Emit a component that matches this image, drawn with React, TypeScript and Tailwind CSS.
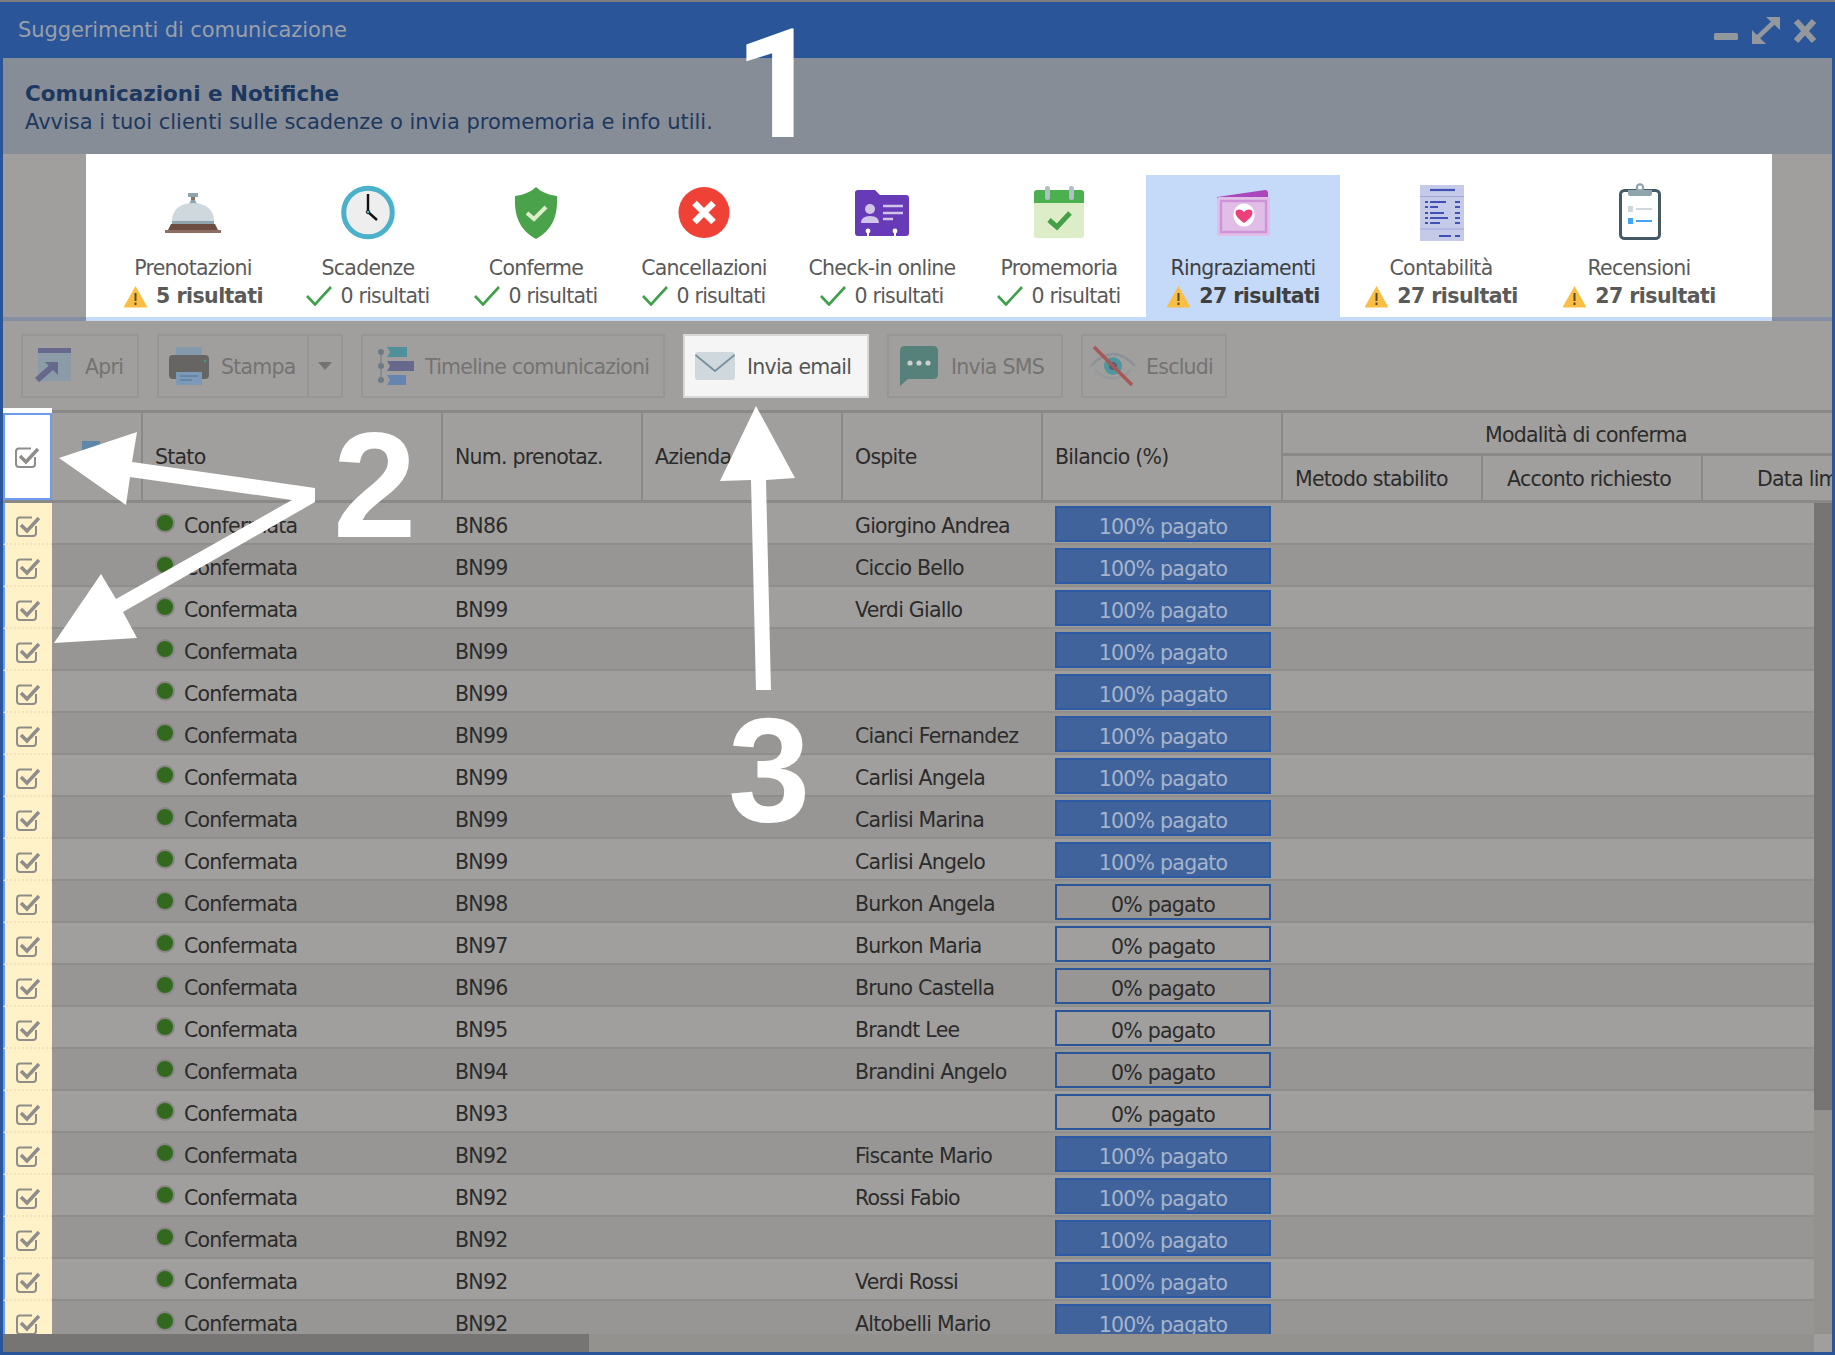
import React from "react";

const Warn = () => (
  <svg width="25" height="23" viewBox="0 0 25 23" className="shrink-0">
    <path d="M12.5 1 L24 21.5 Q24.5 22.5 23 22.5 L2 22.5 Q0.5 22.5 1 21.5 Z" fill="#f9bf45" />
    <rect x="11.5" y="8" width="2" height="8" fill="#5b4a20" />
    <rect x="11.5" y="17.5" width="2" height="2.5" fill="#5b4a20" />
  </svg>
);
const Ok = () => (
  <svg width="26" height="20" viewBox="0 0 26 20" className="shrink-0">
    <path d="M1 10 L9 18.5 L25 1" fill="none" stroke="#3f9f4a" strokeWidth="2.6" />
  </svg>
);

const IconBell = () => (
  <svg width="60" height="60" viewBox="0 0 60 60">
    <rect x="25" y="10" width="10" height="4" fill="#90a4ae" />
    <rect x="28" y="14" width="4" height="3" fill="#8d6e63" />
    <path d="M26 21 L28 17 L32 17 L34 21 Z" fill="#90a4ae" />
    <path d="M9 38 C9 26 18 20 30 20 C42 20 51 26 51 38 Z" fill="#cfd8dc" />
    <rect x="9" y="38" width="42" height="3" fill="#90a4ae" />
    <path d="M8 41 L52 41 L55 47 L5 47 Z" fill="#6d4c41" />
    <rect x="2" y="47" width="56" height="3" fill="#8d6e63" />
  </svg>
);
const IconClock = () => (
  <svg width="60" height="60" viewBox="0 0 60 60">
    <circle cx="30" cy="29.5" r="24.3" fill="#eeeeee" stroke="#4bb0c9" strokeWidth="5" />
    <path d="M30 11 L30 29 L39 37" fill="none" stroke="#111" strokeWidth="2.4" />
    <circle cx="30" cy="29" r="1.8" fill="#4bb0c9" stroke="#111" strokeWidth="0.8" />
  </svg>
);
const IconShield = () => (
  <svg width="60" height="60" viewBox="0 0 60 60">
    <path d="M30 4 C35 9 43 12 51 13 C52 34 46 47 30 56 C14 47 8 34 9 13 C17 12 25 9 30 4 Z" fill="#4aa34a" />
    <path d="M21 30 L28 36 L40 24" fill="none" stroke="#dcedc8" strokeWidth="4" />
  </svg>
);
const IconX = () => (
  <svg width="60" height="60" viewBox="0 0 60 60">
    <circle cx="30" cy="29.5" r="25.5" fill="#ef4136" />
    <path d="M20.5 20 L39.5 39 M39.5 20 L20.5 39" stroke="#fff" strokeWidth="6.5" />
  </svg>
);
const IconCheckin = () => (
  <svg width="60" height="60" viewBox="0 0 60 60">
    <path d="M6 7 L23 7 L28 12 L54 12 Q57 12 57 15 L57 50 Q57 53 54 53 L6 53 Q3 53 3 50 L3 10 Q3 7 6 7 Z" fill="#673ab7" />
    <circle cx="18" cy="26" r="5" fill="#d1c4e9" />
    <path d="M9 40 Q9 33 18 33 Q27 33 27 40 Z" fill="#d1c4e9" />
    <path d="M31 23 H51 M31 30 H51 M31 36 H41" stroke="#d1c4e9" strokeWidth="2.4" />
    <circle cx="16" cy="48" r="2.4" fill="#fff" />
    <rect x="15" y="48" width="2" height="5" fill="#fff" />
    <circle cx="43" cy="48" r="2.4" fill="#fff" />
    <rect x="42" y="48" width="2" height="5" fill="#fff" />
  </svg>
);
const IconCalendar = () => (
  <svg width="60" height="60" viewBox="0 0 60 60">
    <path d="M5 20 H55 V52 Q55 55 52 55 H8 Q5 55 5 52 Z" fill="#dcedc8" />
    <path d="M8 7 H52 Q55 7 55 10 V20 H5 V10 Q5 7 8 7 Z" fill="#4caf50" />
    <rect x="16" y="3" width="5" height="14" rx="2.5" fill="#b0bec5" />
    <rect x="40" y="3" width="5" height="14" rx="2.5" fill="#b0bec5" />
    <path d="M20 37 L28 44 L41 30" fill="none" stroke="#43a047" strokeWidth="5" />
  </svg>
);
const IconCard = () => (
  <svg width="60" height="60" viewBox="0 0 60 60">
    <path d="M4 14 L52 7 Q55 7 55 10 L55 16 L4 16 Z" fill="#ab47bc" />
    <rect x="4" y="14" width="53" height="39" rx="2" fill="#e1bee7" />
    <rect x="8" y="18" width="45" height="31" fill="#e1bee7" stroke="#ce93d8" strokeWidth="2.4" />
    <ellipse cx="31" cy="32" rx="10.5" ry="11.5" fill="#fff" />
    <path d="M31 40 C24 35 22.5 32 22.5 29.5 C22.5 26 28 25 31 29 C34 25 39.5 26 39.5 29.5 C39.5 32 38 35 31 40 Z" fill="#ec407a" />
  </svg>
);
const IconReceipt = () => (
  <svg width="60" height="60" viewBox="0 0 60 60">
    <rect x="9" y="2" width="44" height="56" fill="#c5cae9" />
    <path d="M9 13.5 H53 M9 46 H53" stroke="#9fa8da" strokeWidth="1.2" />
    <path d="M19 7 H44" stroke="#3f51b5" strokeWidth="2.2" />
    <path d="M14 19 H17 M19 19 H35 M44 19 H49 M14 24 H17 M19 24 H27 M44 24 H49 M14 30 H17 M19 30 H33 M44 30 H49 M14 35 H17 M19 35 H37 M44 35 H49 M14 40 H17 M19 40 H29 M44 40 H49 M28 53 H40 M44 53 H49" stroke="#3f51b5" strokeWidth="2.2" />
  </svg>
);
const IconClipboard = () => (
  <svg width="60" height="60" viewBox="0 0 60 60">
    <rect x="11.5" y="7.5" width="39" height="48" rx="4" fill="#fff" stroke="#455a64" strokeWidth="3" />
    <circle cx="31" cy="4.5" r="3.2" fill="#fff" stroke="#90a4ae" strokeWidth="2.2" />
    <path d="M19 7 H43 V11 Q43 13 41 13 H21 Q19 13 19 11 Z" fill="#90a4ae" />
    <rect x="19" y="23" width="5" height="6" fill="#cfd8dc" />
    <rect x="27" y="25" width="16" height="2" fill="#cfd8dc" />
    <rect x="19" y="35" width="5" height="6" fill="#42a5f5" />
    <rect x="27" y="37" width="16" height="2" fill="#42a5f5" />
  </svg>
);

const tabs = [
  { w: "w-[174px]", icon: <IconBell />, label: "Prenotazioni", res: "5 risultati", warn: true },
  { w: "w-[176px]", icon: <IconClock />, label: "Scadenze", res: "0 risultati" },
  { w: "w-[160px]", icon: <IconShield />, label: "Conferme", res: "0 risultati" },
  { w: "w-[176px]", icon: <IconX />, label: "Cancellazioni", res: "0 risultati" },
  { w: "w-[180px]", icon: <IconCheckin />, label: "Check-in online", res: "0 risultati" },
  { w: "w-[174px]", icon: <IconCalendar />, label: "Promemoria", res: "0 risultati" },
  { w: "w-[194px]", icon: <IconCard />, label: "Ringraziamenti", res: "27 risultati", warn: true, active: true },
  { w: "w-[202px]", icon: <IconReceipt />, label: "Contabilità", res: "27 risultati", warn: true },
  { w: "w-[194px]", icon: <IconClipboard />, label: "Recensioni", res: "27 risultati", warn: true },
];

type Row = [string, string, number];
const rows: Row[] = [
  ["BN86", "Giorgino Andrea", 100],
  ["BN99", "Ciccio Bello", 100],
  ["BN99", "Verdi Giallo", 100],
  ["BN99", "", 100],
  ["BN99", "", 100],
  ["BN99", "Cianci Fernandez", 100],
  ["BN99", "Carlisi Angela", 100],
  ["BN99", "Carlisi Marina", 100],
  ["BN99", "Carlisi Angelo", 100],
  ["BN98", "Burkon Angela", 0],
  ["BN97", "Burkon Maria", 0],
  ["BN96", "Bruno Castella", 0],
  ["BN95", "Brandt Lee", 0],
  ["BN94", "Brandini Angelo", 0],
  ["BN93", "", 0],
  ["BN92", "Fiscante Mario", 100],
  ["BN92", "Rossi Fabio", 100],
  ["BN92", "", 100],
  ["BN92", "Verdi Rossi", 100],
  ["BN92", "Altobelli Mario", 100],
];

const Check = () => (
  <svg width="24" height="24" viewBox="0 0 24 24" className="shrink-0">
    <path d="M16 3.5 H4 Q1 3.5 1 6.5 V19 Q1 22 4 22 H17 Q20 22 20 19 V12" fill="none" stroke="#8e8d8b" strokeWidth="2" />
    <path d="M5 11 L11 17 L23 4" fill="none" stroke="#8e8d8b" strokeWidth="3.6" />
  </svg>
);

const btn = "h-[64px] border-2 flex items-center shrink-0";
const btnOff = "border-[#979694] text-[#747372]";

export default function App() {
  return (
    <div className="relative h-[1355px] w-[1835px] overflow-hidden bg-[#7d7c7a] pt-[2px] font-['DejaVu_Sans','Liberation_Sans',sans-serif] text-[20.5px] tracking-[-0.75px] text-[#2b2b2b]">
      <div className="flex h-[1353px] flex-col border-x-[3px] border-b-[3px] border-[#2a5599] bg-[#a19f9d]">
        {/* title bar */}
        <div className="flex h-[56px] shrink-0 items-center justify-between bg-[#2a5599] pl-[15px] pr-[14px] text-[#9a9fa8]">
          <span className="pt-[2px] text-[21px] tracking-[-0.1px]">Suggerimenti di comunicazione</span>
          <svg width="104" height="30" viewBox="0 0 104 30">
            <rect x="0" y="18" width="24" height="7" rx="1.5" fill="#93989f" />
            <path d="M40 26 L62 5" fill="none" stroke="#93989f" strokeWidth="4.5" />
            <path d="M52 2 H66 V15 Z M38 15 V29 H52 Z" fill="#93989f" />
            <path d="M82 6 L100 26 M100 6 L82 26" stroke="#93989f" strokeWidth="6" />
          </svg>
        </div>
        {/* info band */}
        <div className="flex h-[96px] shrink-0 flex-col justify-center bg-[#868d96] pl-[22px] pt-[4px] text-[21px] tracking-normal text-[#1d3860]">
          <div className="text-[21.5px] font-bold leading-[28px]">Comunicazioni e Notifiche</div>
          <div className="leading-[28px]">Avvisa i tuoi clienti sulle scadenze o invia promemoria e info utili.</div>
        </div>
        {/* tabs */}
        <div className="shrink-0 border-b-[4px] border-[#858fa3]">
          <div className="ml-[83px] flex h-[163px] w-[1686px] bg-white pl-[20px] pt-[21px]">
            {tabs.map((t) => (
              <div key={t.label} className={`flex h-[142px] shrink-0 flex-col items-center pt-[8px] ${t.w} ${t.active ? "bg-[#c5d9f9] text-[#3f3f3f]" : "text-[#5a5a5a]"}`}>
                {t.icon}
                <div className="mt-[11px] leading-[28px]">{t.label}</div>
                <div className="flex h-[28px] items-center gap-[8px] leading-[28px]">
                  {t.warn ? <Warn /> : <Ok />}
                  <span className={t.warn ? "font-bold tracking-[-0.55px]" : ""}>{t.res}</span>
                </div>
              </div>
            ))}
          </div>
        </div>
        <div className="ml-[83px] -mt-[4px] h-[4px] w-[1686px] shrink-0 bg-[#c5d9f9]" />
        {/* toolbar */}
        <div className="flex h-[89px] shrink-0 items-start gap-[18px] pl-[18px] pt-[13px]">
          <div className={`${btn} ${btnOff} w-[118px] pl-[10px] gap-[6px]`}>
            <svg width="46" height="46" viewBox="0 0 46 46">
              <rect x="5" y="5" width="33" height="33" fill="#8b9ba8" />
              <rect x="5" y="5" width="33" height="5" fill="#66698c" />
              <path d="M4 37 L20 23" stroke="#66698c" strokeWidth="6" />
              <path d="M12 19 H25 V32 Z" fill="#66698c" />
            </svg>
            <span className="pt-[2px]">Apri</span>
          </div>
          <div className={`${btn} ${btnOff} w-[186px] pl-[8px]`}>
            <svg width="44" height="46" viewBox="0 0 44 46">
              <rect x="9" y="4" width="26" height="12" fill="#849aab" />
              <rect x="2" y="12" width="40" height="24" rx="4" fill="#666564" />
              <rect x="9" y="29" width="26" height="13" fill="#7c9ab8" />
              <path d="M13 33 H31 M13 37 H25" stroke="#5e7ea3" strokeWidth="1.6" />
              <rect x="37" y="17" width="2" height="2" fill="#43a070" />
            </svg>
            <span className="ml-[10px] w-[86px] pt-[2px]">Stampa</span>
            <span className="flex h-full flex-1 items-center justify-center border-l-2 border-[#979694]">
              <svg width="14" height="8" viewBox="0 0 14 8"><path d="M0 0 H14 L7 8 Z" fill="#747372" /></svg>
            </span>
          </div>
          <div className={`${btn} ${btnOff} w-[304px] pl-[13px] gap-[11px]`}>
            <svg width="38" height="46" viewBox="0 0 38 46">
              <path d="M5 9 V37" stroke="#6e7a85" strokeWidth="1" />
              <circle cx="5" cy="9" r="3" fill="#6e7a85" />
              <circle cx="5" cy="23" r="3" fill="#6e7a85" />
              <circle cx="5" cy="37" r="3" fill="#6e7a85" />
              <path d="M14 9 L11 4 H31 V14 H11 Z" fill="#50909a" />
              <path d="M14 23 L11 18 H38 V28 H11 Z" fill="#66698c" />
              <path d="M14 37 L11 32 H30 V42 H11 Z" fill="#6684b0" />
            </svg>
            <span className="pt-[2px]">Timeline comunicazioni</span>
          </div>
          <div className={`${btn} w-[186px] border-[#d8d8d8] bg-[#f5f5f5] pl-[10px] gap-[12px] text-[#555]`}>
            <svg width="40" height="28" viewBox="0 0 40 28">
              <rect width="40" height="28" rx="3" fill="#cfd8dc" />
              <path d="M0.5 3 L20 19 L39.5 3" fill="none" stroke="#78909c" strokeWidth="1.8" />
            </svg>
            <span className="pt-[2px]">Invia email</span>
          </div>
          <div className={`${btn} ${btnOff} w-[176px] pl-[11px] gap-[13px]`}>
            <svg width="38" height="40" viewBox="0 0 38 40">
              <path d="M5 0 H33 Q38 0 38 5 V28 Q38 33 33 33 H8 L0 40 V5 Q0 0 5 0 Z" fill="#56807a" />
              <circle cx="10" cy="17" r="2.6" fill="#c9d0ce" />
              <circle cx="19" cy="17" r="2.6" fill="#c9d0ce" />
              <circle cx="28" cy="17" r="2.6" fill="#c9d0ce" />
            </svg>
            <span className="pt-[2px]">Invia SMS</span>
          </div>
          <div className={`${btn} ${btnOff} w-[146px] pl-[7px] gap-[10px]`}>
            <svg width="46" height="42" viewBox="0 0 46 42">
              <path d="M1 21 Q23 -3 45 21" fill="none" stroke="#8a9298" strokeWidth="2.4" />
              <path d="M5 25 Q23 42 41 25" fill="none" stroke="#93999d" strokeWidth="2.4" />
              <circle cx="23" cy="21" r="9" fill="#4f969e" />
              <circle cx="23" cy="21" r="4" fill="#56627a" />
              <path d="M4 2 L42 40" stroke="#a85858" strokeWidth="3.6" />
            </svg>
            <span className="pt-[2px]">Escludi</span>
          </div>
        </div>
        {/* table header */}
        <div className="flex h-[93px] shrink-0 border-y-[3px] border-[#8a8987]">
          <div className="relative flex w-[49px] shrink-0 items-center justify-center border-2 border-[#6b9cf0] bg-white pr-[2px]">
            <Check />
            <div className="absolute -left-[2px] -right-[2px] -top-[7px] h-[5px] bg-white" />
          </div>
          <div className="relative w-[91px] shrink-0 border-r-2 border-[#8a8987]">
            <div className="absolute left-[30px] top-[28px] h-[14px] w-[18px] bg-[#5f87a8]" />
          </div>
          {[
            ["w-[300px]", "Stato"],
            ["w-[200px]", "Num. prenotaz."],
            ["w-[200px]", "Azienda"],
            ["w-[200px]", "Ospite"],
            ["w-[240px]", "Bilancio (%)"],
          ].map(([w, t]) => (
            <div key={t} className={`flex shrink-0 items-center border-r-2 border-[#8a8987] pl-[12px] pt-[2px] ${w}`}>
              {t}
            </div>
          ))}
          <div className="flex min-w-0 flex-1 flex-col overflow-hidden">
            <div className="flex h-[43px] shrink-0 items-center border-b-[3px] border-[#8a8987] pl-[202px] pt-[4px]">
              Modalità di conferma
            </div>
            <div className="flex flex-1 whitespace-nowrap">
              <div className="flex w-[200px] shrink-0 items-center border-r-2 border-[#8a8987] pl-[12px] pt-[2px]">Metodo stabilito</div>
              <div className="flex w-[220px] shrink-0 items-center justify-center border-r-2 border-[#8a8987] pr-[6px] pt-[2px]">Acconto richiesto</div>
              <div className="flex flex-1 items-center pl-[54px] pt-[2px]">Data limite</div>
            </div>
          </div>
        </div>
        {/* table body */}
        <div className="flex min-h-0 flex-1">
          <div className="min-w-0 flex-1 overflow-hidden">
            {rows.map((r, i) => (
              <div key={i} className={`flex h-[42px] border-b-2 border-[#8f8e8c] ${i % 2 ? "bg-[#979694]" : "bg-[#a19f9d]"}`}>
                <div className="-mb-[2px] flex h-[42px] w-[49px] shrink-0 items-center justify-center border-b-2 border-l-2 border-dotted border-b-[#f1e4bd] border-l-[#6b9cf0] [border-left-style:solid] bg-[#fff1c8] pr-[2px] pt-[6px]">
                  <Check />
                </div>
                <div className="w-[90px] shrink-0" />
                <div className="flex w-[300px] shrink-0 items-center pl-[13px]">
                  <span className="-mt-[1px] h-[20px] w-[20px] rounded-full border-2 border-[#888785] bg-[#33691e]" />
                  <span className="ml-[9px] pt-[7px]">Confermata</span>
                </div>
                <div className="flex w-[200px] shrink-0 items-center pl-[13px] pt-[7px]">{r[0]}</div>
                <div className="w-[200px] shrink-0" />
                <div className="flex w-[200px] shrink-0 items-center pl-[13px] pt-[7px]">{r[1]}</div>
                <div className="w-[240px] shrink-0 pl-[13px] pt-[3px]">
                  <div className={`flex h-[36px] w-[216px] items-center justify-center border-2 pt-[7px] ${r[2] ? "border-[#2c5aa6] bg-[#41639b] text-[#a6b4cc]" : "border-[#2a5599] text-[#2b2b2b]"}`}>
                    {r[2]}% pagato
                  </div>
                </div>
              </div>
            ))}
          </div>
          <div className="w-[18px] shrink-0 bg-[#93928f] pl-[2px]">
            <div className="-ml-[2px] h-[607px] w-[18px] bg-[#767573]" />
          </div>
        </div>
        <div className="flex h-[18px] shrink-0 bg-[#93928f]">
          <div className="w-[586px] shrink-0 bg-[#767573]" />
          <div className="flex-1" />
          <div className="w-[18px] shrink-0 bg-[#a19f9d]" />
        </div>
      </div>

      {/* annotations */}
      <svg className="pointer-events-none absolute left-0 top-0" width="1835" height="1355" viewBox="0 0 1835 1355">
        <path
          d="M59 458 L137 432 L132 462 L315 488 L315 502 L123 612 L137 638 L54 643 L101 574 L116 599 L292 500 L130 477 L126 505 Z"
          fill="#fff"
        />
        <path d="M756 406 L795 478 L766 480 L771 690 L756 690 L751 480 L720 481 Z" fill="#fff" />
      </svg>
      <div className="pointer-events-none absolute left-[734px] top-[9px] font-['Roboto',sans-serif] text-[152px] font-bold leading-none tracking-normal text-white">1</div>
      <div className="pointer-events-none absolute left-[333px] top-[410px] font-['Liberation_Sans',sans-serif] text-[150px] font-bold leading-none tracking-normal text-white">2</div>
      <div className="pointer-events-none absolute left-[728px] top-[696px] font-['Liberation_Sans',sans-serif] text-[148px] font-bold leading-none tracking-normal text-white">3</div>
    </div>
  );
}
